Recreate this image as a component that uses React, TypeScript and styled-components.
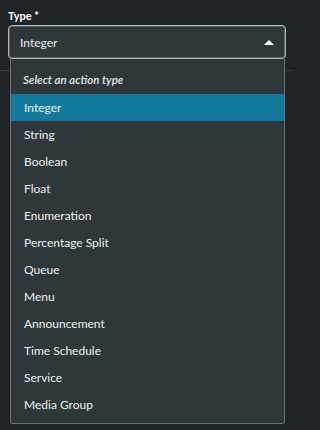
import styled, {createGlobalStyle} from 'styled-components'

const GlobalStyle = createGlobalStyle`
    body {
        margin: 0;
        background: #1e2427;
        font-family: Lato, "Open Sans", sans-serif;
    }
`

const Page = styled.div`
    width: 293px;
    height: 430px;
    overflow: hidden;
`
const Section = styled.div`
    padding: 9px 7px 11px 8px;
    border-bottom: 1px solid #363d41;
`
const Label = styled.div`
    color: #ffffff;
    font-weight: 700;
    font-size: 11px;
    line-height: 14px;
    margin-bottom: 2px;
`
const SelectWrap = styled.div`
    position: relative;
`
const Select = styled.div`
    height: 32px;
    box-sizing: content-box;
    border: 1px solid #b3b8ba;
    box-shadow: 0 0 0 1px #5d6467 inset;
    border-radius: 4px;
    background: #2f3739;
    display: flex;
    align-items: center;
    justify-content: space-between;
    padding: 0 11px 0 11px;
    color: #eef0f1;
    font-size: 12px;
`
const Caret = styled.div`
    width: 0;
    height: 0;
    border-left: 5px solid transparent;
    border-right: 5px solid transparent;
    border-bottom: 5px solid #ffffff;
`
const Menu = styled.div`
    position: absolute;
    top: 100%;
    left: 2px;
    right: 1px;
    background: #2f373a;
    border: 1px solid #6c7376;
    border-top: none;
    border-radius: 0 0 3px 3px;
    padding: 6px 0 5px;
`
const Heading = styled.div`
    height: 28px;
    display: flex;
    align-items: center;
    padding: 0 12px 1px;
    color: #e4e7e8;
    font-size: 11.5px;
    font-style: italic;
    font-weight: 600;
`
const Option = styled.div<{$active?: boolean}>`
    height: 27px;
    display: flex;
    align-items: center;
    padding: 0 13px;
    color: #eef0f1;
    font-size: 12px;
    background: ${(props) => (props.$active ? '#137a9e' : 'transparent')};
`

const TYPES = [
    'Integer',
    'String',
    'Boolean',
    'Float',
    'Enumeration',
    'Percentage Split',
    'Queue',
    'Menu',
    'Announcement',
    'Time Schedule',
    'Service',
    'Media Group',
]

function App() {
    const selected = 'Integer'
    return (
        <>
            <GlobalStyle />
            <Page>
                <Section>
                    <Label>Type *</Label>
                    <SelectWrap>
                        <Select>
                            <span>{selected}</span>
                            <Caret />
                        </Select>
                        <Menu>
                            <Heading>Select an action type</Heading>
                            {TYPES.map((t) => (
                                <Option key={t} $active={t === selected}>
                                    {t}
                                </Option>
                            ))}
                        </Menu>
                    </SelectWrap>
                </Section>
            </Page>
        </>
    )
}
export default App
